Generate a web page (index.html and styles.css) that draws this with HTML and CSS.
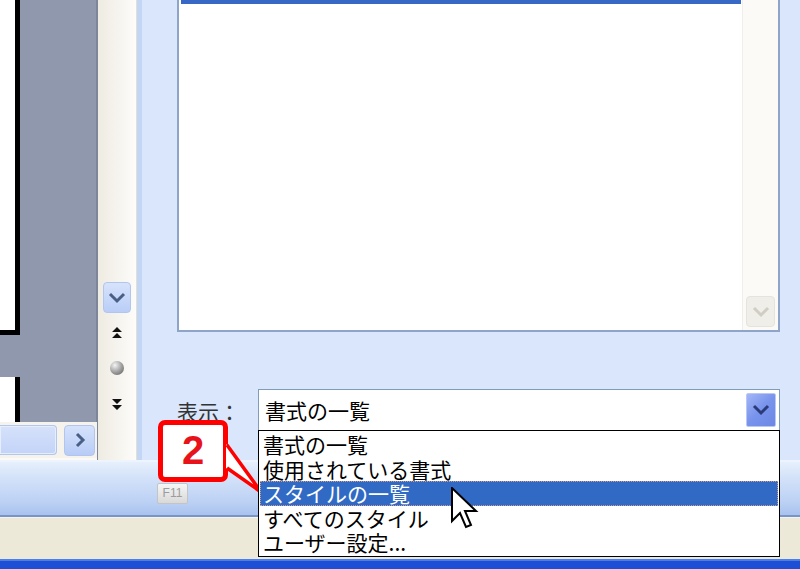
FILE: index.html
```html
<!DOCTYPE html>
<html lang="ja">
<head>
<meta charset="utf-8">
<title>スタイルと書式</title>
<link rel="stylesheet" href="styles.css">
</head>
<body>
<div class="screen">
  <div class="main">
    <div class="doc">
      <div class="canvas">
        <div class="page page1"></div>
        <div class="page page2"></div>
      </div>
      <div class="hscroll">
        <div class="hthumb"></div>
        <div class="hbtn">
          <svg width="14" height="16" viewBox="0 0 14 16"><path d="M4 2 L10 8 L4 14" fill="none" stroke="#4a5f86" stroke-width="3"/></svg>
        </div>
      </div>
    </div>
    <div class="vscroll">
      <div class="vbtn">
        <svg width="18" height="12" viewBox="0 0 18 12"><path d="M2 2 L9 9 L16 2" fill="none" stroke="#4a5f86" stroke-width="3"/></svg>
      </div>
      <svg class="browse-up" width="12" height="14" viewBox="0 0 12 14"><path d="M6 1 L11 6 L1 6 Z M6 7 L11 12 L1 12 Z" fill="#111"/></svg>
      <div class="ball"></div>
      <svg class="browse-down" width="12" height="14" viewBox="0 0 12 14"><path d="M1 2 L11 2 L6 7 Z M1 8 L11 8 L6 13 Z" fill="#111"/></svg>
    </div>
    <div class="pane">
      <div class="listbox">
        <div class="list-area"><div class="sel-bar"></div></div>
        <div class="list-scroll">
          <div class="list-down">
            <svg width="18" height="12" viewBox="0 0 18 12"><path d="M2 2 L9 9 L16 2" fill="none" stroke="#cfcdc4" stroke-width="3"/></svg>
          </div>
        </div>
      </div>
      <div class="show-row">
        <span class="show-label">表示：</span>
        <div class="combo">
          <span class="combo-text">書式の一覧</span>
          <div class="combo-btn">
            <svg width="18" height="12" viewBox="0 0 18 12"><path d="M2 2 L9 9 L16 2" fill="none" stroke="#2a3b78" stroke-width="3"/></svg>
          </div>
        </div>
      </div>
    </div>
  </div>
  <div class="statusbar"></div>
  <div class="cream"></div>
  <div class="taskbar"></div>

  <div class="f11">F11</div>
  <div class="callout">2</div>
  <svg class="tail" width="44" height="60" viewBox="0 0 44 60">
    <path d="M4 6 L39 54 L4 30 Z" fill="#fff"/>
    <path d="M5 7 L39 54 L5 30" fill="none" stroke="#f00" stroke-width="3.5" stroke-linejoin="miter"/>
  </svg>

  <ul class="dropdown">
    <li class="opt">書式の一覧</li>
    <li class="opt">使用されている書式</li>
    <li class="opt opt-sel">スタイルの一覧</li>
    <li class="opt">すべてのスタイル</li>
    <li class="opt">ユーザー設定...</li>
  </ul>

  <svg class="cursor" width="28" height="44" viewBox="0 0 14 22">
    <path d="M0.5 0.5 L0.5 17 L4.5 13 L7.5 20 L10 19 L7 12 L12.5 12 Z" fill="#fff" stroke="#000" stroke-width="1" stroke-linejoin="miter"/>
  </svg>
</div>
</body>
</html>
```

FILE: styles.css
```css
* { box-sizing: border-box; }
html, body { margin: 0; padding: 0; background: #ece9d8; }
body { font-family: "Noto Sans CJK JP", "Noto Sans", sans-serif; }

.screen {
  position: relative;
  width: 800px;
  height: 569px;
  overflow: hidden;
  display: flex;
  flex-direction: column;
}

.main { display: flex; height: 460px; }

/* document area */
.doc { width: 97px; display: flex; flex-direction: column; }
.canvas {
  height: 422px;
  background: #8f98ad;
  border-right: 1px solid #7c8599;
  display: flex;
  flex-direction: column;
}
.page { background: #fff; box-sizing: content-box; width: 15px; }
.page1 { height: 330px; border-right: 5px solid #000; border-bottom: 5px solid #000; }
.page2 { margin-top: 42px; flex: 1; border-right: 5px solid #000; }

.hscroll {
  height: 38px;
  background: #f5f3ec;
  border-bottom: 2px solid #fbfaf6;
  display: flex;
  align-items: center;
  gap: 7px;
}
.hthumb {
  width: 57px;
  height: 30px;
  border-radius: 0 4px 4px 0;
  background: linear-gradient(#d6e2fb, #c3d4f8);
  border: 1px solid #b3c6ee;
  border-left: none;
  box-shadow: inset 0 0 0 1px #e6eefd;
}
.hbtn {
  width: 31px;
  height: 31px;
  border-radius: 4px;
  background: linear-gradient(#d5e2fc, #b8ccf6);
  border: 1px solid #b2c5ee;
  display: flex;
  align-items: center;
  justify-content: center;
}

/* vertical scrollbar */
.vscroll {
  width: 40px;
  border-left: 1px solid #7d869a;
  border-right: 1px solid #e2dfd4;
  background: linear-gradient(to right, #eeebe2, #fdfcf9);
  display: flex;
  flex-direction: column;
  align-items: center;
  padding-top: 282px;
}
.vbtn {
  width: 28px;
  height: 31px;
  border-radius: 4px;
  background: linear-gradient(#d7e3fc, #b9cdf7);
  border: 1px solid #b2c5ee;
  display: flex;
  align-items: center;
  justify-content: center;
}
.browse-up { margin-top: 13px; }
.ball {
  margin-top: 21px;
  width: 14px;
  height: 14px;
  border-radius: 50%;
  background: radial-gradient(circle at 35% 30%, #f4f4f4, #a2a2a2 50%, #555 100%);
}
.browse-down { margin-top: 22px; }

/* task pane */
.pane {
  flex: 1;
  background: #d9e6fb;
  border-left: 5px solid #c3d6f5;
  padding: 0 20px 0 35px;
  display: flex;
  flex-direction: column;
}
.listbox {
  height: 332px;
  border: 2px solid #8ea4c8;
  border-top: none;
  background: #fff;
  display: flex;
}
.list-area { flex: 1; }
.sel-bar { height: 4px; margin: 0 1px 0 2px; background: #3768c5; }
.list-scroll {
  width: 36px;
  background: #fbfaf6;
  border-left: 1px solid #efeee8;
  display: flex;
  flex-direction: column;
  justify-content: flex-end;
  align-items: center;
  padding-bottom: 3px;
}
.list-down {
  width: 29px;
  height: 31px;
  border-radius: 4px;
  background: #efeee8;
  border: 1px solid #e4e3dc;
  display: flex;
  align-items: center;
  justify-content: center;
}

.show-row {
  margin-top: 57px;
  height: 42px;
  display: flex;
  align-items: center;
}
.show-label {
  width: 81px;
  font-size: 21px;
  color: #333;
  line-height: 24px;
  padding-top: 2px;
}
.combo {
  flex: 1;
  height: 42px;
  border: 1px solid #7f9db9;
  background: #fff;
  display: flex;
  align-items: center;
  justify-content: space-between;
  padding-left: 6px;
}
.combo-text { font-size: 21px; color: #000; line-height: 24px; }
.combo-btn {
  width: 30px;
  height: 34px;
  margin-right: 3px;
  border-radius: 2px;
  background: linear-gradient(135deg, #a3b6f7, #7893ec 50%, #6d88e4);
  border: 1px solid #b9c7f5;
  display: flex;
  align-items: center;
  justify-content: center;
}

/* bottom bars */
.statusbar {
  height: 57px;
  background: linear-gradient(#e6effc, #d3e2f9 30%, #bcd1f4 75%, #a9c3ee);
  border-top: 2px solid #eef4fd;
  border-bottom: 2px solid #7994c9;
}
.cream { height: 42px; background: #ece9d8; border-top: 1px solid #f6f4ea; }
.taskbar {
  height: 10px;
  background: #1f4ed6;
  border-top: 2px solid #4a7fea;
}

/* overlays */
.dropdown {
  position: absolute;
  left: 258px;
  top: 430px;
  width: 522px;
  margin: 0;
  padding: 1px 0;
  list-style: none;
  background: #fff;
  border: 1px solid #000;
}
.opt {
  height: 24.6px;
  line-height: 24.6px;
  font-size: 21px;
  padding-left: 4px;
  color: #000;
  white-space: nowrap;
}
.opt-sel {
  background: #316ac5;
  color: #fff;
  margin: 0 1px;
  padding-left: 3px;
  outline: 1px dotted #c99;
  outline-offset: -1px;
}

.callout {
  position: absolute;
  left: 158px;
  top: 420px;
  width: 70px;
  height: 62px;
  border: 5px solid #f00;
  border-radius: 7px;
  background: #fff;
  color: #e8121a;
  font-family: "Liberation Sans", Arial, sans-serif;
  font-weight: bold;
  font-size: 40px;
  line-height: 50px;
  text-align: center;
}
.tail { position: absolute; left: 222px; top: 438px; }

.f11 {
  position: absolute;
  left: 157px;
  top: 483px;
  width: 31px;
  height: 21px;
  background: linear-gradient(#f5f5f5, #d9d9d9);
  border: 1px solid #c4c4c4;
  border-radius: 2px;
  font-family: "Liberation Sans", Arial, sans-serif;
  font-size: 12px;
  color: #9c9c9c;
  text-align: center;
  line-height: 19px;
}

.cursor { position: absolute; left: 451px; top: 487px; }
```
